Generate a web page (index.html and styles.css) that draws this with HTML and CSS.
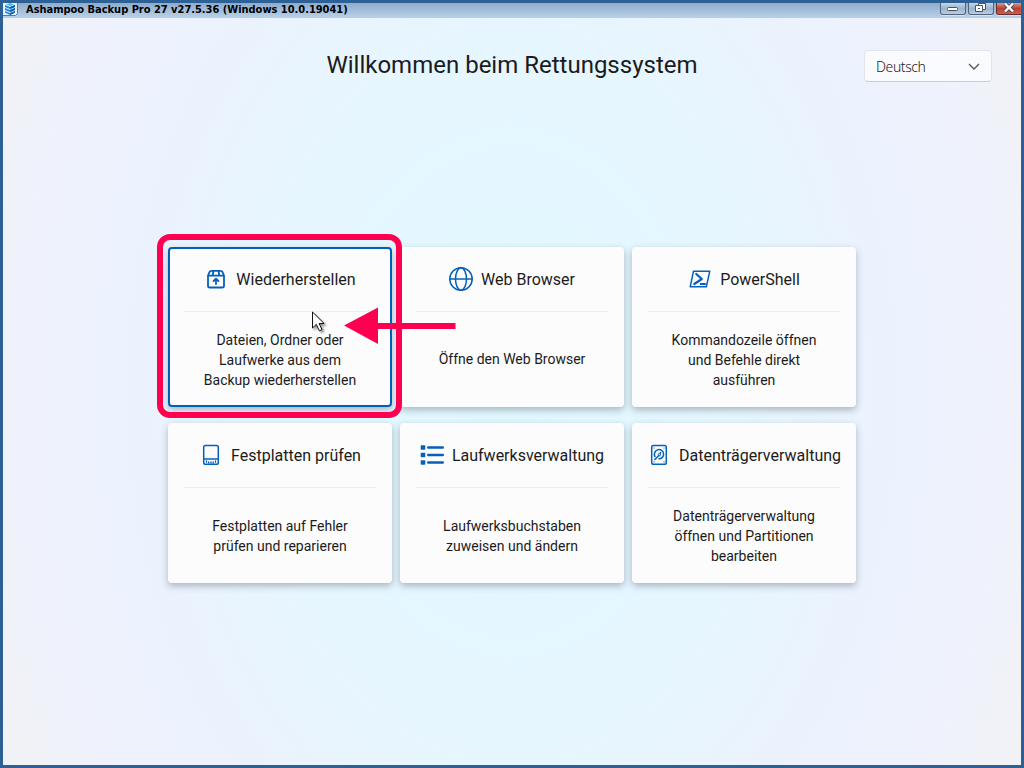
FILE: index.html
```html
<!DOCTYPE html>
<html lang="de">
<head>
    <meta charset="UTF-8">
    <meta name="viewport" content="width=device-width, initial-scale=1.0">
    <title>Ashampoo Backup Pro 27</title>
    <link rel="stylesheet" href="styles.css">
</head>
<body>
    <div class="window">
        <div class="titlebar">
            <svg class="app-icon" width="15" height="13" viewBox="0 0 15 13">
                <path d="M0 0h14v11l-2 1.5H0z" fill="#e6f2fc"/>
                <path d="M14.5 0v10.5l-2 2H0" fill="none" stroke="#477fb5"/>
                <path d="M2 2l5 2 5-2v2L7 6 2 4zM2 5l5 2 5-2v2L7 9 2 7zM2 8l5 2 5-2v1.5L7 12 2 9.500z" fill="#1689df"/>
                <path d="M7 0l4 1.500-4 1.500-4-1.500z" fill="#42b5f4"/>
                <path d="M7 4l5-2v2L7 6zM7 7l5-2v2L7 9zM7 10l5-2v1.500L7 12z" fill="#125aa9"/>
            </svg>
            <span class="caption">Ashampoo Backup Pro 27 v27.5.36 (Windows 10.0.19041)</span>
            <div class="controls">
                <span class="control">
                    <svg width="24" height="11" viewBox="0 0 24 11"><rect x="6.500" y="4.500" width="10" height="3" rx="1" fill="#fff" stroke="#4b5260"/></svg>
                </span>
                <span class="control">
                    <svg width="24" height="11" viewBox="0 0 24 11"><path d="M9.500 0.500h7v6h-7z" fill="#fff" stroke="#4b5260"/><path d="M6.500 2.500h7v6h-7z" fill="#fff" stroke="#4b5260"/><path d="M9 5.500h2" stroke="#4b5260"/></svg>
                </span>
                <span class="control close">
                    <svg width="24" height="11" viewBox="0 0 24 11"><path d="M8 0.500l8 8M16 0.500l-8 8" stroke="#5b4450" stroke-width="4.200"/><path d="M8 0.500l8 8M16 0.500l-8 8" stroke="#fff" stroke-width="2.400"/></svg>
                </span>
            </div>
        </div>
        <main>
            <h1>Willkommen beim Rettungssystem</h1>
            <div class="language">
                <span>Deutsch</span>
                <svg width="12" height="8" viewBox="0 0 12 8"><path d="M1 1l5 5 5-5" fill="none" stroke="#555" stroke-width="1.300"/></svg>
            </div>
            <div class="cards">
                <div class="card selected">
                    <div class="card-title">
                        <svg class="icon" viewBox="0 0 24 24"><path d="M4 8.500v10.200a1.800 1.800 0 0 0 1.800 1.800h12.400a1.800 1.800 0 0 0 1.800-1.800V8.500l-1.600-3.700a1.800 1.800 0 0 0-1.600-1H7.200a1.800 1.800 0 0 0-1.600 1zM4 8.700h16M9.400 4l-.7 4.700M14.600 4l.7 4.700M12 17v-5M9.600 14L12 11.600l2.400 2.400"/></svg>
                        <span>Wiederherstellen</span>
                    </div>
                    <p>Dateien, Ordner oder Laufwerke aus dem Backup wiederherstellen</p>
                </div>
                <div class="card">
                    <div class="card-title">
                        <svg class="icon thin" viewBox="0 0 24 24"><circle cx="12" cy="12" r="11.200"/><ellipse cx="12" cy="12" rx="5.500" ry="11.200"/><path d="M1 12h22"/></svg>
                        <span>Web Browser</span>
                    </div>
                    <p class="single">Öffne den Web Browser</p>
                </div>
                <div class="card">
                    <div class="card-title">
                        <svg class="icon thin" viewBox="0 0 24 24"><path d="M5.500 4.200h16.300l-3.500 15.600H2.200z"/><path d="M8.300 7l5.500 5-7.500 5M12.800 17H17" stroke-width="2.200"/></svg>
                        <span>PowerShell</span>
                    </div>
                    <p>Kommandozeile öffnen und Befehle direkt ausführen</p>
                </div>
                <div class="card">
                    <div class="card-title">
                        <svg class="icon thin" viewBox="0 0 24 24"><path d="M6.500 2.600h11a1.800 1.800 0 0 1 1.800 1.800v15a1.800 1.800 0 0 1-1.800 1.800h-11a1.800 1.800 0 0 1-1.800-1.800v-15a1.800 1.800 0 0 1 1.800-1.800zM5 16h14"/><path d="M7.500 17.800v1.400M9.700 18.800v1.200M12 18.800v1.200M14.200 18.800v1.200M16.500 17.800v1.400" stroke-width="1.300"/></svg>
                        <span>Festplatten prüfen</span>
                    </div>
                    <p>Festplatten auf Fehler prüfen und reparieren</p>
                </div>
                <div class="card">
                    <div class="card-title">
                        <svg class="icon list" viewBox="0 0 24 24"><rect x="0.700" y="2.200" width="4.600" height="4.600" rx="0.800"/><rect x="0.700" y="9.700" width="4.600" height="4.600" rx="0.800"/><rect x="0.700" y="17.200" width="4.600" height="4.600" rx="0.800"/><rect x="7" y="3.300" width="17" height="2.400" rx="1.200"/><rect x="7" y="10.800" width="17" height="2.400" rx="1.200"/><rect x="7" y="18.300" width="17" height="2.400" rx="1.200"/></svg>
                        <span>Laufwerksverwaltung</span>
                    </div>
                    <p>Laufwerksbuchstaben zuweisen und ändern</p>
                </div>
                <div class="card">
                    <div class="card-title">
                        <svg class="icon thin" viewBox="0 0 24 24"><rect x="4.700" y="2.600" width="14.600" height="18.600" rx="1.800"/><path d="M8 13.500a4.600 4.600 0 1 1 4 2.300M7.800 16.500l3.800-3.800"/><path d="M13.600 9.400l-2.600 2 1.600 1.600z" stroke-width="1"/><path d="M7 5h.1M17 5h.1M7 18.800h.1M17 18.800h.1" stroke-width="1.200"/></svg>
                        <span>Datenträgerverwaltung</span>
                    </div>
                    <p>Datenträgerverwaltung öffnen und Partitionen bearbeiten</p>
                </div>
            </div>
        </main>
    </div>

    <!-- highlight, arrow and mouse pointer over the first card -->
    <div class="highlight"></div>
    <svg class="arrow" width="112" height="38" viewBox="0 0 112 38"><path d="M0 18.500L34 0.500V16H111.500V22H34V37z" fill="#ff0050"/></svg>
    <svg class="pointer" width="18" height="24" viewBox="0 0 18 24"><path d="M.5 1v16l3.800-3.600 3 6.400 2.700-1.200-2.900-6.100h5z" fill="#fff" stroke="#111"/></svg>
</body>
</html>
```
FILE: styles.css
```css
* {
    box-sizing: border-box;
}
body {
    margin: 0;
    font-family: Roboto, sans-serif;
    color: #1b1b1b;
}
.window {
    height: 768px;
    display: flex;
    flex-direction: column;
    border: 3px solid #2d6094;
    overflow: hidden;
}
.titlebar {
    height: 15px;
    flex: none;
    display: flex;
    align-items: flex-start;
    background: linear-gradient(#8eacca, #b9d1ea);
}
.caption {
    margin-left: 8px;
    font: bold 11px/13px "DejaVu Sans Condensed", "DejaVu Sans", sans-serif;
    font-stretch: condensed;
    letter-spacing: -0.02px;
    color: #000;
    white-space: nowrap;
}
.controls {
    display: flex;
    gap: 2px;
    margin-left: auto;
}
.control {
    width: 26px;
    height: 12px;
    display: flex;
    justify-content: center;
    border: 1px solid #53657b;
    border-top: 0;
    border-radius: 0 0 3px 3px;
    background: linear-gradient(#c4d5e7, #9bb4cd 50%, #b8cde2);
    box-shadow: 0 1px #d3e2f1;
}
.control svg {
    flex: none;
}
.control.close {
    width: 25px;
    border-color: #672b32;
    border-right: 0;
    border-radius: 0 0 0 3px;
    background: linear-gradient(#d69c94, #bd3e2e 50%, #c96052);
}
main {
    flex: 1;
    display: grid;
    grid-template-columns: 1fr auto 1fr;
    grid-template-rows: 229px 1fr;
    background: radial-gradient(ellipse 600px 840px at 50% 50%, #e1f8ff 0%, #e6f6ff 42%, #ebf2fe 62%, #eff2fd 80%, #f1f2f8 90%, #f2f2f4 98%);
}
h1 {
    grid-column: 2;
    margin: 31px 0 0;
    font-size: 24px;
    font-weight: 400;
    line-height: 32px;
    white-space: nowrap;
}
.language {
    width: 128px;
    height: 32px;
    margin: 32px 29px 0 0;
    padding: 1px 11px 0;
    justify-self: end;
    display: flex;
    align-items: center;
    justify-content: space-between;
    border: 1px solid #e2e5ef;
    border-bottom-color: #c9ccd6;
    border-radius: 4px;
    background: #fafbff;
    color: #222;
    font: 14px "Noto Sans", sans-serif;
    font-weight: 300;
    letter-spacing: -0.4px;
}
.cards {
    grid-column: 1 / 4;
    justify-self: center;
    align-self: start;
    display: grid;
    grid-template-columns: repeat(3, 224px);
    grid-auto-rows: 160px;
    gap: 16px 8px;
}
.card {
    display: flex;
    flex-direction: column;
    padding: 0 16px;
    border-radius: 4px;
    background: #fcfcfd;
    box-shadow: 0 3px 7px rgba(70, 80, 95, 0.38);
}
.card.selected {
    padding: 0 14px;
    border: 2px solid #005fb8;
}
.card-title {
    height: 65px;
    display: flex;
    align-items: center;
    justify-content: center;
    gap: 8px;
    border-bottom: 1px solid #ededee;
    font-size: 16px;
    white-space: nowrap;
}
.selected .card-title {
    height: 63px;
}
.selected .card-title .icon,
.selected .card-title span {
    margin-top: -2px;
}
.icon {
    width: 24px;
    height: 24px;
    flex: none;
    fill: none;
    stroke: #0560b8;
    stroke-width: 1.8;
    stroke-linejoin: round;
    stroke-linecap: round;
}
.icon.thin {
    stroke-width: 1.5;
}
.icon.list {
    fill: #0560b8;
    stroke: none;
}
.card p {
    flex: 1;
    margin: 0;
    padding: 0 12px;
    display: flex;
    align-items: center;
    justify-content: center;
    font-size: 14px;
    line-height: 20px;
    text-align: center;
}
.card p.single {
    padding-bottom: 2px;
}
.card.selected p {
    padding-top: 2px;
}
.highlight {
    position: absolute;
    left: 157px;
    top: 234px;
    width: 245px;
    height: 184px;
    border: 6px solid #ff0050;
    border-radius: 13px;
}
.arrow {
    position: absolute;
    left: 344px;
    top: 307px;
}
.pointer {
    position: absolute;
    left: 312px;
    top: 311px;
    filter: drop-shadow(2px 2px 1px rgba(0, 0, 0, 0.4));
}
```
